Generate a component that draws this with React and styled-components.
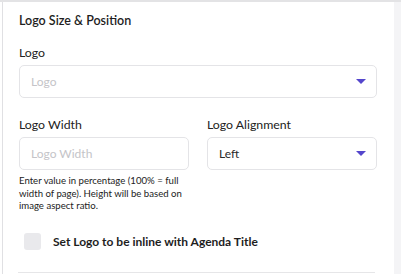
import React from "react";
import styled, { createGlobalStyle } from "styled-components";

const Global = createGlobalStyle`
  html, body { margin: 0; padding: 0; background: #ffffff; }
  body { font-family: Lato, "Open Sans", sans-serif; color: #222; }
  * { box-sizing: border-box; }
`;

const Page = styled.div`
  width: 401px;
  height: 274px;
  display: flex;
  background: #ffffff;
  border-top: 2px solid #e3e3e5;
  overflow: hidden;
`;

const Panel = styled.div`
  flex: 1;
  margin-left: 2px;
  border-left: 1px solid #e0e0e3;
  padding: 11px 17px 0 16px;
  display: flex;
  flex-direction: column;
`;

const SideStrip = styled.div`
  width: 7px;
  background: #f4f4f6;
`;

const Title = styled.div`
  font-size: 12.5px;
  font-weight: 600;
  line-height: 16px;
  color: #1e1e1e;
`;

const Label = styled.div`
  font-size: 12.3px;
  font-weight: 400;
  line-height: 16px;
  color: #222;
  margin-bottom: 4px;
`;

const Field = styled.div`
  margin-top: ${(p) => p.$mt || 0}px;
  display: flex;
  flex-direction: column;
`;

const Row = styled.div`
  display: grid;
  grid-template-columns: 170px 170px;
  column-gap: 18px;
  margin-top: 19px;
`;

const Box = styled.div`
  height: 33px;
  border: 1px solid #e4e4e7;
  border-radius: 5px;
  display: flex;
  align-items: center;
  justify-content: space-between;
  padding: 0 10px 0 11px;
  font-size: 12px;
  color: ${(p) => (p.$placeholder ? "#c4c4c8" : "#2a2a2a")};
  background: #fff;
`;

const Arrow = styled.svg`
  width: 10px;
  height: 5px;
  flex: none;
`;

const Help = styled.div`
  font-size: 9.6px;
  line-height: 12.5px;
  color: #222;
  margin-top: 5px;
  width: 170px;
`;

const CheckRow = styled.label`
  display: flex;
  align-items: center;
  gap: 12px;
  margin-top: 20px;
  padding-left: 5px;
`;

const CheckBox = styled.span`
  width: 17px;
  height: 17px;
  border-radius: 3px;
  background: #e9e9ec;
  flex: none;
`;

const CheckText = styled.span`
  font-size: 12px;
  font-weight: 700;
  color: #1e1e1e;
`;

const Divider = styled.div`
  margin: 22px 2px 0 -1px;
  height: 1px;
  background: #e6e6e8;
`;

const Caret = () => (
  <Arrow viewBox="0 0 10 5">
    <path d="M0 0 H10 L5 5 Z" fill="#5446cc" />
  </Arrow>
);

export default function App() {
  return (
    <>
      <Global />
      <Page>
        <Panel>
          <Title>Logo Size &amp; Position</Title>
          <Field $mt={16}>
            <Label>Logo</Label>
            <Box $placeholder>
              <span>Logo</span>
              <Caret />
            </Box>
          </Field>
          <Row>
            <Field>
              <Label>Logo Width</Label>
              <Box $placeholder>
                <span>Logo Width</span>
              </Box>
              <Help>
                Enter value in percentage (100% = full width of page). Height
                will be based on image aspect ratio.
              </Help>
            </Field>
            <Field>
              <Label>Logo Alignment</Label>
              <Box>
                <span>Left</span>
                <Caret />
              </Box>
            </Field>
          </Row>
          <CheckRow>
            <CheckBox />
            <CheckText>Set Logo to be inline with Agenda Title</CheckText>
          </CheckRow>
          <Divider />
        </Panel>
        <SideStrip />
      </Page>
    </>
  );
}
